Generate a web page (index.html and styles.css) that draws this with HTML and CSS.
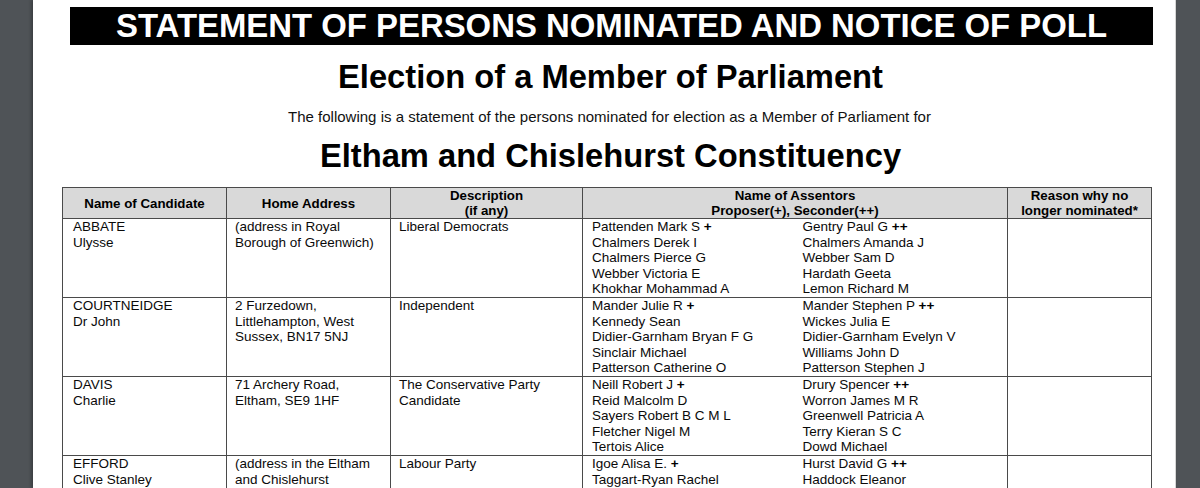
FILE: index.html
```html
<!DOCTYPE html>
<html lang="en">
<head>
<meta charset="utf-8">
<title>Statement of Persons Nominated</title>
<link rel="stylesheet" href="styles.css">
</head>
<body>
<div class="viewer">
  <div class="page">
    <div class="banner">STATEMENT OF PERSONS NOMINATED AND NOTICE OF POLL</div>
    <h1 class="title">Election of a Member of Parliament</h1>
    <p class="intro">The following is a statement of the persons nominated for election as a Member of Parliament for</p>
    <h2 class="constituency">Eltham and Chislehurst Constituency</h2>
    <table class="nominations">
      <colgroup>
        <col class="c-name">
        <col class="c-addr">
        <col class="c-desc">
        <col class="c-prop">
        <col class="c-sec">
        <col class="c-reason">
      </colgroup>
      <thead>
        <tr>
          <th>Name of Candidate</th>
          <th>Home Address</th>
          <th>Description<br>(if any)</th>
          <th colspan="2">Name of Assentors<br>Proposer(+), Seconder(++)</th>
          <th>Reason why no<br>longer nominated*</th>
        </tr>
      </thead>
      <tbody>
        <tr>
          <td class="cand">ABBATE<br>Ulysse</td>
          <td>(address in Royal Borough of Greenwich)</td>
          <td>Liberal Democrats</td>
          <td class="prop">Pattenden Mark S <b>+</b><br>Chalmers Derek I<br>Chalmers Pierce G<br>Webber Victoria E<br>Khokhar Mohammad A</td>
          <td class="sec">Gentry Paul G <b>++</b><br>Chalmers Amanda J<br>Webber Sam D<br>Hardath Geeta<br>Lemon Richard M</td>
          <td></td>
        </tr>
        <tr>
          <td class="cand">COURTNEIDGE<br>Dr John</td>
          <td>2 Furzedown, Littlehampton, West Sussex, BN17 5NJ</td>
          <td>Independent</td>
          <td class="prop">Mander Julie R <b>+</b><br>Kennedy Sean<br>Didier-Garnham Bryan F G<br>Sinclair Michael<br>Patterson Catherine O</td>
          <td class="sec">Mander Stephen P <b>++</b><br>Wickes Julia E<br>Didier-Garnham Evelyn V<br>Williams John D<br>Patterson Stephen J</td>
          <td></td>
        </tr>
        <tr>
          <td class="cand">DAVIS<br>Charlie</td>
          <td>71 Archery Road, Eltham, SE9 1HF</td>
          <td>The Conservative Party Candidate</td>
          <td class="prop">Neill Robert J <b>+</b><br>Reid Malcolm D<br>Sayers Robert B C M L<br>Fletcher Nigel M<br>Tertois Alice</td>
          <td class="sec">Drury Spencer <b>++</b><br>Worron James M R<br>Greenwell Patricia A<br>Terry Kieran S C<br>Dowd Michael</td>
          <td></td>
        </tr>
        <tr class="cut">
          <td class="cand">EFFORD<br>Clive Stanley</td>
          <td>(address in the Eltham and Chislehurst Constituency)</td>
          <td>Labour Party</td>
          <td class="prop">Igoe Alisa E. <b>+</b><br>Taggart-Ryan Rachel</td>
          <td class="sec">Hurst David G <b>++</b><br>Haddock Eleanor</td>
          <td></td>
        </tr>
      </tbody>
    </table>
  </div>
</div>
</body>
</html>
```
FILE: styles.css
```css
html, body {
  margin: 0;
  padding: 0;
}
body {
  background: #4f5357;
  font-family: "Liberation Sans", Arial, sans-serif;
  color: #000;
  overflow: hidden;
}
.viewer {
  height: 488px;
  padding-left: 33px;
  overflow: hidden;
}
.page {
  width: 1143px;
  height: 488px;
  background: #fff;
  border-right: 1px solid #d6d6d6;
  box-shadow: -2px 0 3px rgba(0, 0, 0, 0.25);
  overflow: hidden;
  box-sizing: border-box;
  padding-top: 7px;
}
.banner {
  margin: 0 22px 0 37px;
  height: 38px;
  background: #000;
  color: #fff;
  font-weight: bold;
  font-size: 32.9px;
  line-height: 38px;
  text-align: center;
  white-space: nowrap;
}
.title,
.constituency {
  margin: 0;
  font-size: 32.7px;
  line-height: 36px;
  font-weight: bold;
  text-align: center;
  padding-left: 13px;
}
.title {
  margin-top: 14px;
}
.intro {
  margin: 13px 0 0;
  font-size: 15px;
  line-height: 18px;
  text-align: center;
  padding-left: 11px;
  color: #111;
}
.constituency {
  margin-top: 12px;
}
.nominations {
  margin: 13px 0 0 29px;
  width: 1089px;
  table-layout: fixed;
  border-collapse: collapse;
  font-size: 13.5px;
  line-height: 15.6px;
  color: #0a0a0a;
}
.c-name { width: 164px; }
.c-addr { width: 164px; }
.c-desc { width: 192px; }
.c-prop { width: 212px; }
.c-sec { width: 213px; }
.c-reason { width: 144px; }
.nominations th {
  background: #d9d9d9;
  border: 1px solid #4a4a4a;
  font-weight: bold;
  font-size: 13.3px;
  line-height: 15px;
  height: 30px;
  padding: 0 4px;
  text-align: center;
  vertical-align: middle;
  color: #000;
}
.nominations td {
  border: 1px solid #4a4a4a;
  padding: 0 6px 0 8px;
  vertical-align: top;
}
.nominations td.cand {
  padding-left: 10px;
}
.nominations td.prop {
  border-right: none;
  padding-left: 9px;
}
.nominations td.sec {
  border-left: none;
  padding-left: 8px;
}
.nominations tr.cut td {
  height: 78px;
}
.nominations b {
  font-weight: bold;
  color: #000;
}
```
